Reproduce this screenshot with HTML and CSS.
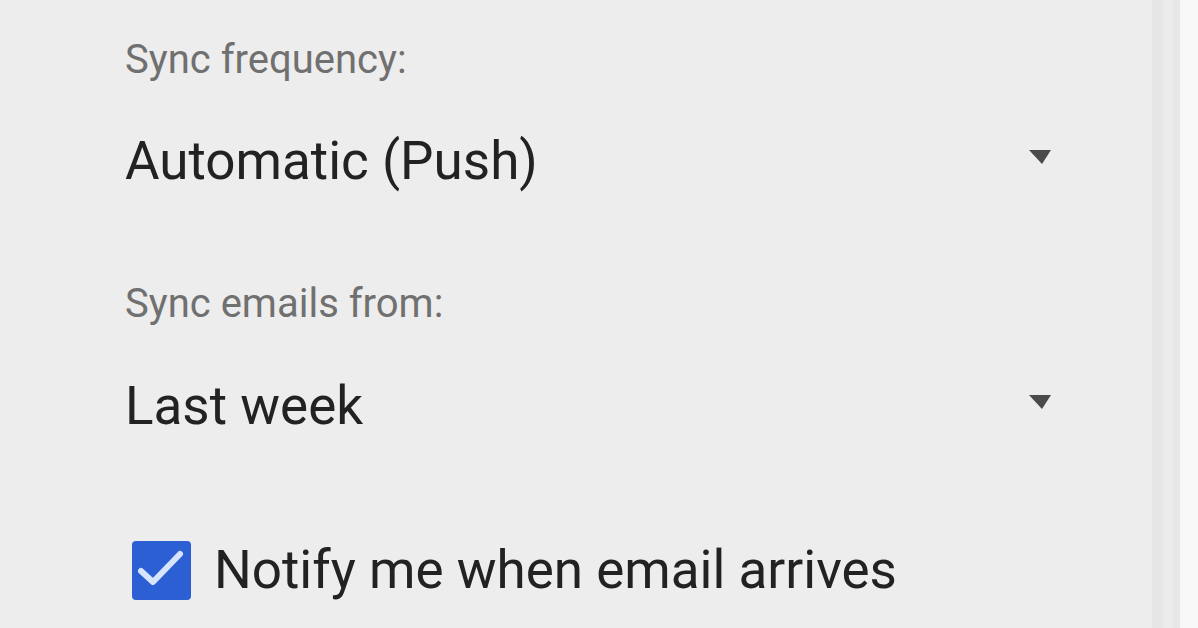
FILE: index.html
```html
<!DOCTYPE html>
<html lang="en">
<head>
<meta charset="utf-8">
<title>Account settings</title>
<link rel="stylesheet" href="styles.css">
</head>
<body>
<div class="screen">
  <main class="panel">
    <section class="field field-first">
      <div class="label">Sync frequency:</div>
      <div class="select">
        <span class="value">Automatic (Push)</span>
        <svg class="caret" width="24" height="16" viewBox="0 0 24 16"><polygon points="1,2 23,2 14,16" fill="#4a4a4a"/></svg>
      </div>
    </section>
    <section class="field">
      <div class="label">Sync emails from:</div>
      <div class="select">
        <span class="value">Last week</span>
        <svg class="caret" width="24" height="16" viewBox="0 0 24 16"><polygon points="1,2 23,2 14,16" fill="#4a4a4a"/></svg>
      </div>
    </section>
    <label class="check-row">
      <span class="checkbox">
        <svg width="59" height="59" viewBox="0 0 59 59"><path d="M9 30 L21 41 L48 13" fill="none" stroke="#d6e4ff" stroke-width="6" stroke-linecap="round" stroke-linejoin="round"/></svg>
      </span>
      <span class="value">Notify me when email arrives</span>
    </label>
  </main>
  <div class="gutter"></div>
</div>
</body>
</html>
```
FILE: styles.css
```css
html, body {
  margin: 0;
  padding: 0;
  background: #ededed;
}
.screen {
  display: flex;
  width: 1198px;
  height: 628px;
  overflow: hidden;
  font-family: Roboto, "Noto Sans", sans-serif;
}
.panel {
  flex: 1;
  padding: 38px 100px 0 125px;
  background: #ededed;
  display: flex;
  flex-direction: column;
}
.gutter {
  width: 46px;
  flex: none;
  background: linear-gradient(to right,
    #e6e6e6 0px, #e6e6e6 11px,
    #ececec 11px, #ececec 21px,
    #e7e7e7 21px, #e7e7e7 28px,
    #f8f8f8 28px, #f8f8f8 46px);
}
.field + .field {
  margin-top: 91px;
}
.label {
  font-size: 40px;
  line-height: 44px;
  color: #707070;
}
.select {
  margin-top: 49px;
  display: flex;
  align-items: center;
  justify-content: space-between;
}
.field + .field .select {
  margin-top: 50px;
}
.value {
  font-size: 53px;
  line-height: 60px;
  color: #222222;
}
.caret {
  margin-bottom: 10px;
  display: block;
}
.check-row {
  margin-top: 104px;
  display: flex;
  align-items: center;
  gap: 23px;
}
.checkbox {
  width: 59px;
  height: 59px;
  margin-left: 7px;
  border-radius: 4px;
  background: #2b5fd3;
  display: flex;
}
```
